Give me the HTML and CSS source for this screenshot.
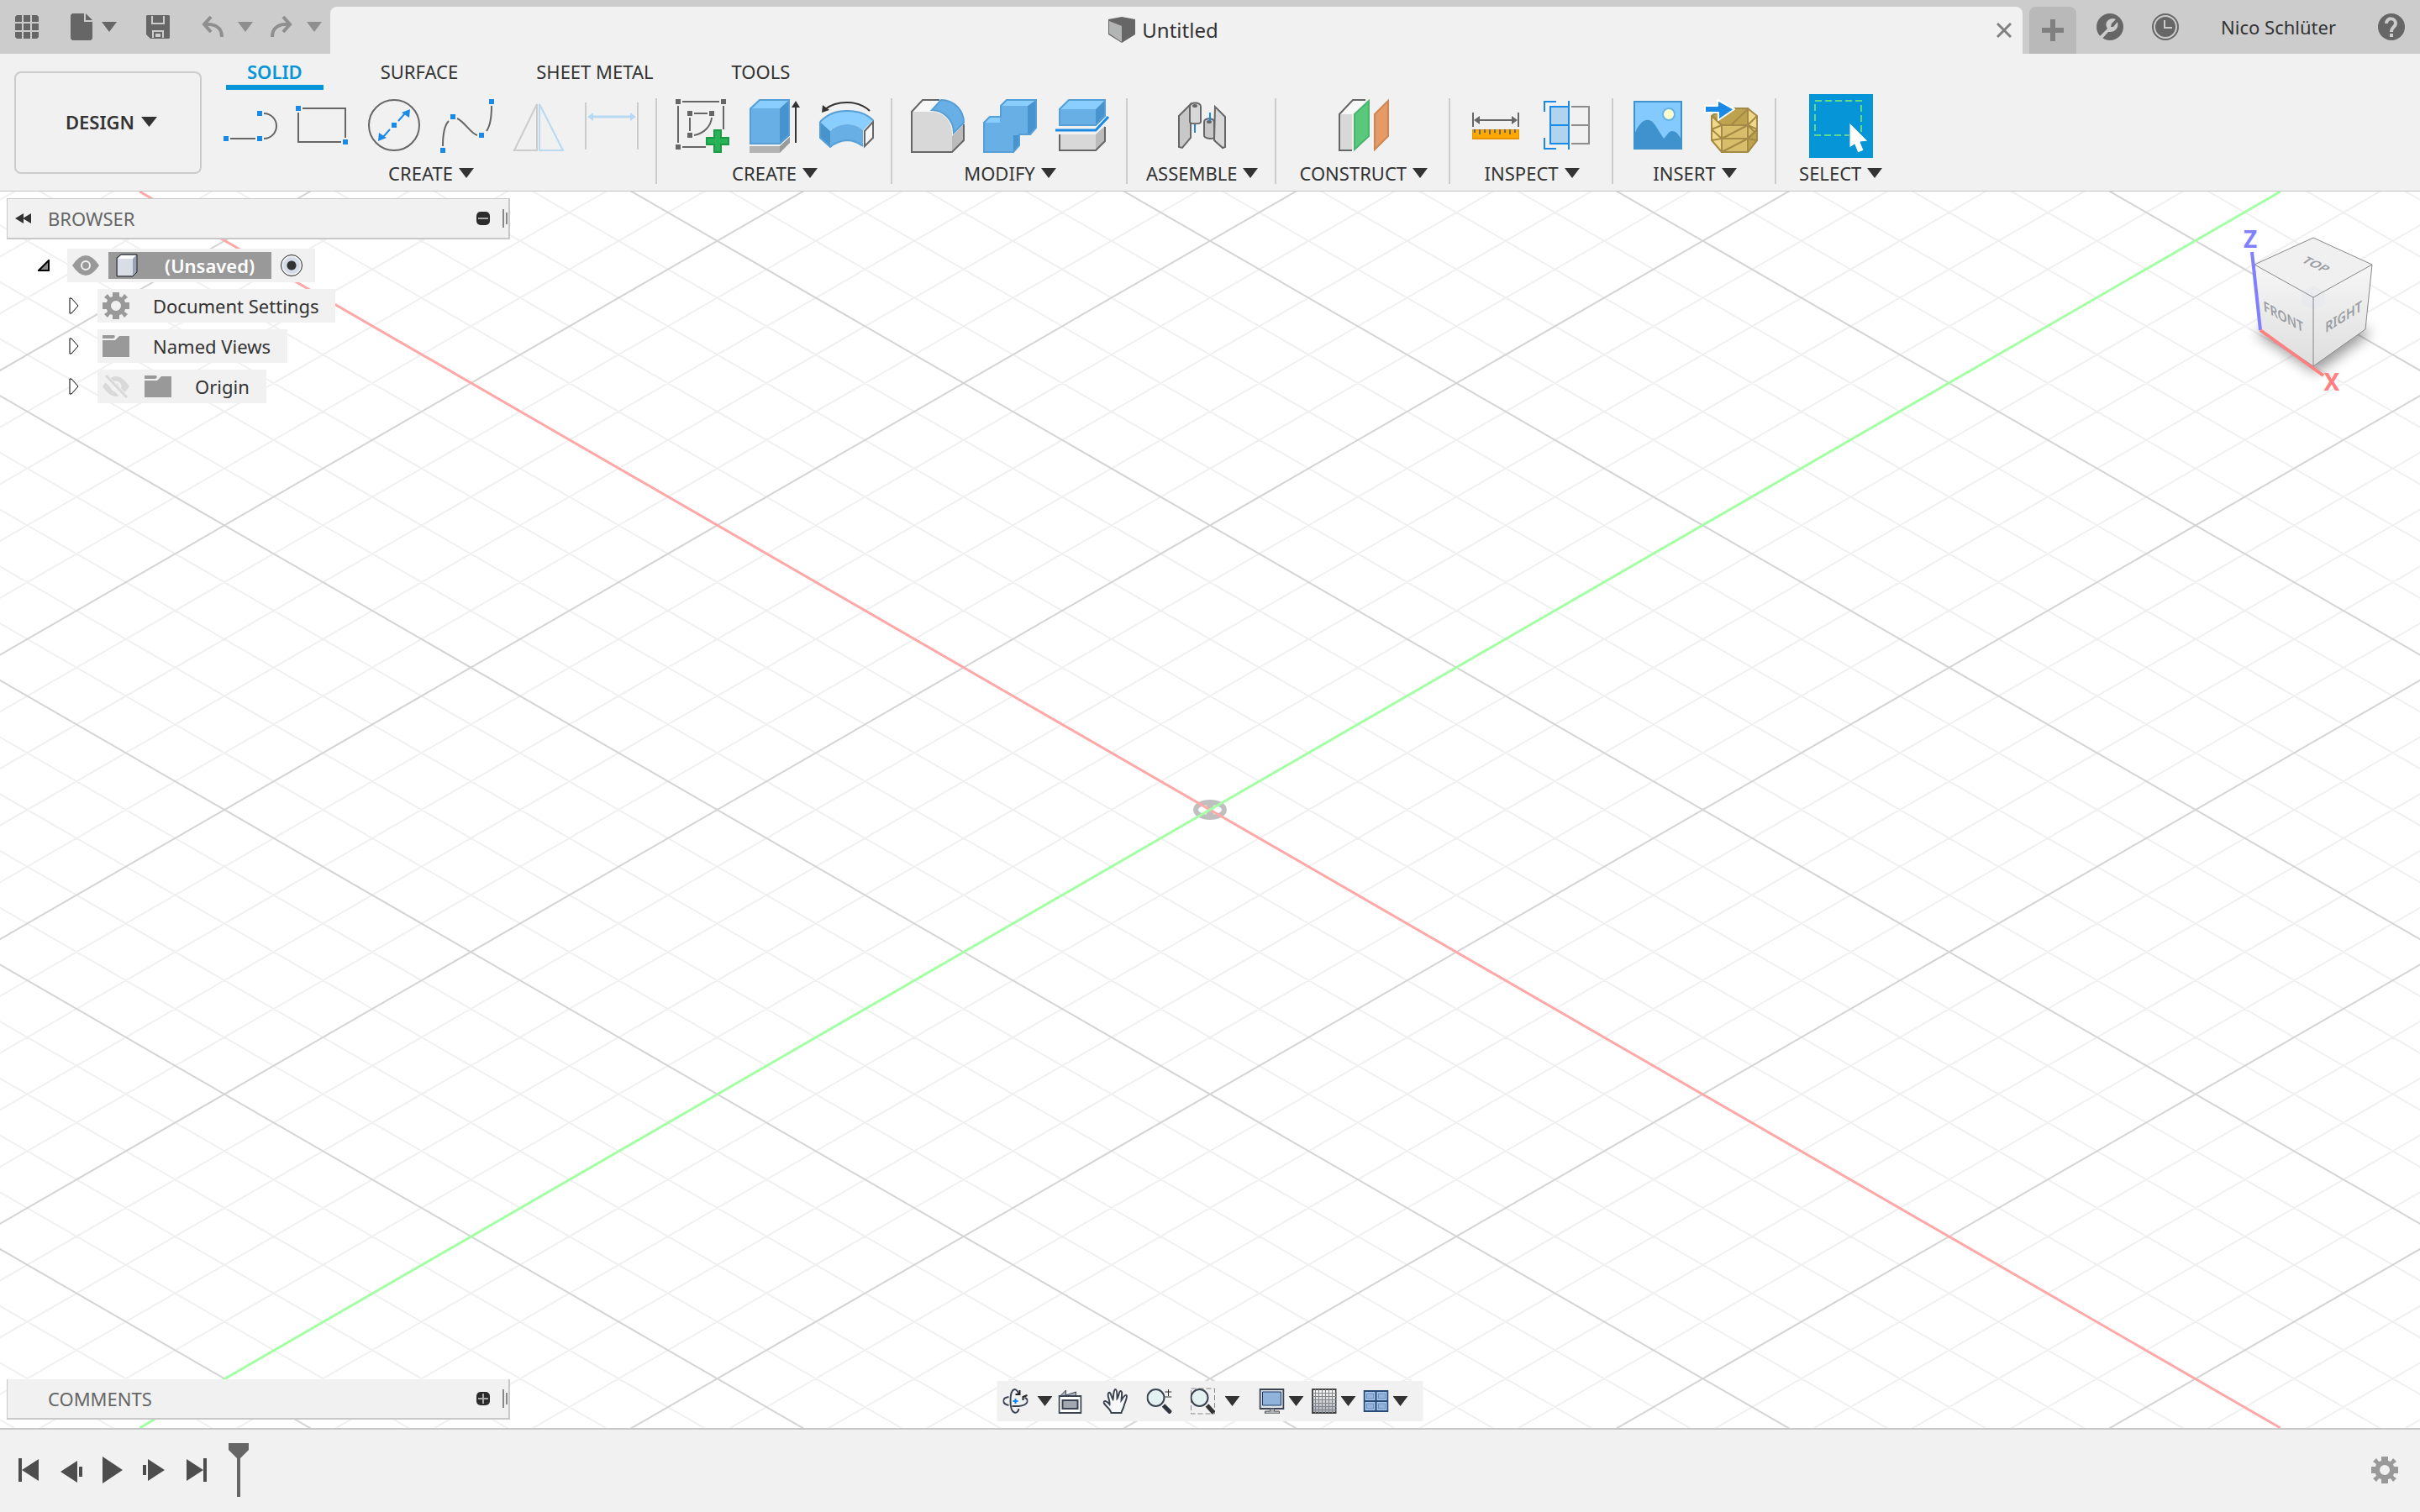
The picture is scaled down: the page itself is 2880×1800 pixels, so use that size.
FILE: index.html
```html
<!DOCTYPE html>
<html lang="en">
<head>
<meta charset="utf-8">
<title>Untitled</title>
<link rel="stylesheet" href="styles.css">
</head>
<body>
<header class="topbar">
  <div class="quick">
    <button class="icon-btn space-l" aria-label="Data panel"><svg width="28" height="28" fill="#666"><path d="M2 0H8V8H0V2ZM10 0H18V8H10ZM20 0H26L28 2V8H20ZM0 10H8V18H0ZM10 10H18V18H10ZM20 10H28V18H20ZM0 20H8V28H2L0 26ZM10 20H18V28H10ZM20 20H28V26L26 28H20Z"/></svg></button>
    <button class="icon-btn file space-m" aria-label="File"><svg width="26" height="32" fill="#666"><path d="M2 0H16V10H26V30L24 32H2L0 30V2ZM18 0L26 8H18Z"/></svg><svg width="18" height="12" fill="#666"><path d="M0 0H18L9 12Z"/></svg></button>
    <button class="icon-btn space-l" aria-label="Save"><svg width="28" height="28" fill="#666"><path fill-rule="evenodd" d="M1 0H27L28 1V27L27 28H5L0 23V1ZM6 1V11H22V1H20V9H8V1ZM7 27H9V20H19V27H21V18H7ZM11 26H17V22H11Z"/></svg></button>
    <button class="icon-btn history space-s" aria-label="Undo"><svg width="26" height="26" fill="none" stroke="#8f8f8f" stroke-width="4"><path d="M11 1L3 10L11 19M3 10C15 9 24 13 24 25"/></svg><svg width="18" height="12" fill="#8f8f8f"><path d="M0 0H18L9 12Z"/></svg></button>
    <button class="icon-btn history" aria-label="Redo"><svg width="26" height="26" fill="none" stroke="#8f8f8f" stroke-width="4"><path d="M15 1L23 10L15 19M23 10C11 9 2 13 2 25"/></svg><svg width="18" height="12" fill="#8f8f8f"><path d="M0 0H18L9 12Z"/></svg></button>
  </div>
  <div class="doc-tab">
    <div class="doc-title"><svg width="32" height="32"><path d="M0 3L16 0L32 3V21L16 31L0 21Z" fill="#666"/><path d="M1 5L16 11V30L1 20Z" fill="#b2b5b4"/></svg><span>Untitled</span></div>
    <button class="icon-btn" aria-label="Close"><svg width="18" height="18" stroke="#808080" stroke-width="3"><path d="M1 1L17 17M17 1L1 17"/></svg></button>
  </div>
  <button class="new-tab" aria-label="New design"><svg width="26" height="26" fill="#808080"><path d="M10 0H16V10H26V16H16V26H10V16H0V10H10Z"/></svg></button>
  <div class="account">
    <button class="icon-btn" aria-label="Extensions"><svg width="32" height="32"><circle cx="16" cy="16" r="16" fill="#666"/><path d="M2 29L13 18C9 12 13 6 20 6L23 7L18 12L17 16L20 16L25 10C27 17 22 23 14 22L5 32Z" fill="#ccc"/></svg></button>
    <button class="icon-btn" aria-label="Job status"><svg width="32" height="32"><circle cx="16" cy="16" r="15" fill="none" stroke="#666" stroke-width="2"/><circle cx="16" cy="16" r="12" fill="#666"/><path d="M15 8V17H24" fill="none" stroke="#ccc" stroke-width="2"/></svg></button>
    <button class="user">Nico Schlüter</button>
    <button class="icon-btn" aria-label="Help"><svg width="32" height="32"><circle cx="16" cy="16" r="16" fill="#666"/><path d="M10 12C10 4 21 5 21 12C21 16 16 16 16 22" fill="none" stroke="#ccc" stroke-width="4"/><path d="M14 24H18V28H14Z" fill="#ccc"/></svg></button>
  </div>
</header>

<section class="toolbar">
  <button class="workspace">DESIGN <svg width="19" height="12"><path d="M0 0H19L9.500 12Z"/></svg></button>
  <div class="ribbon">
    <nav class="tabs">
      <a class="tab active" href="#solid">SOLID</a>
      <a class="tab" href="#surface">SURFACE</a>
      <a class="tab" href="#sheet">SHEET METAL</a>
      <a class="tab" href="#tools">TOOLS</a>
    </nav>
    <div class="groups">
      <div class="group first">
        <div class="tools">
          <button class="tool" aria-label="Line"><svg viewBox="0 0 64 64" class="line"><path d="M8 47H38M48 17A15 15 0 0 1 48 47"/><path class="node" d="M0 44h6v6h-6ZM40 44h6v6h-6ZM40 14h6v6h-6Z"/></svg></button>
          <button class="tool" aria-label="Rectangle"><svg viewBox="0 0 64 64" class="line"><path d="M8 11H59V46M54 51H3V16"/><path class="node" d="M0 8h6v6h-6ZM56 48h6v6h-6Z"/></svg></button>
          <button class="tool" aria-label="Circle"><svg viewBox="0 0 64 64" class="line"><circle cx="31" cy="31" r="30"/><path d="M36 26L44 17M26 36L18 45" stroke="#1b8ae6"/><path class="node" d="M28 28h6v6h-6ZM50 12L49 22L40 16ZM12 50L13 40L22 46Z"/></svg></button>
          <button class="tool" aria-label="Spline"><svg viewBox="0 0 64 64" class="line"><path d="M3 56C3 40 6 30 10 26M20 23C29 27 37 42 44 43M55 38C60 31 61 20 61 8"/><path class="node" d="M0 58h6v6h-6ZM12 18h6v6h-6ZM46 40h6v6h-6ZM58 0h6v6h-6Z"/></svg></button>
          <button class="tool" aria-label="Mirror" disabled><svg viewBox="0 0 64 64" class="line"><path d="M2 61H29V6Z" stroke="#ccc"/><path d="M32 6V61H60Z" stroke="#b8d9f3"/></svg></button>
          <button class="tool" aria-label="Dimension" disabled><svg viewBox="0 0 64 64" class="line"><path d="M1 4V60M63 4V60" stroke="#ccc"/><path d="M8 21H56" stroke="#b8d9f3" stroke-width="3"/><path d="M3 21L10 16V26ZM61 21L54 16V26Z" fill="#b8d9f3" stroke="none"/></svg></button>
        </div>
        <button class="label">CREATE<svg width="18" height="12"><path d="M0 0H18L9 12Z"/></svg></button>
      </div>
      <span class="sep"></span>
      <div class="group">
        <div class="tools">
          <button class="tool" aria-label="Create sketch"><svg viewBox="0 0 64 64" class="line"><path d="M8 3H52M3 8V52M57 8V36M8 57H36M22 17H38M17 22V38M22 43C34 41 42 32 43 22"/><path fill="#666" stroke="none" d="M0 0h6v6h-6ZM54 0h6v6h-6ZM0 54h6v6h-6ZM14 14h6v6h-6ZM40 14h6v6h-6ZM14 40h6v6h-6Z"/><path d="M46 37H54V46H63V54H54V63H46V54H37V46H46Z" fill="#27b355" stroke="#1b9a45"/></svg></button>
          <button class="tool" aria-label="Extrude"><svg viewBox="0 0 64 64"><path d="M2 11L14 0H50L38 11Z" fill="#8aceff"/><path d="M2 11H38V54H2Z" fill="#68afe5"/><path d="M38 11L50 0V43L38 54Z" fill="#4693cd"/><path d="M3 54V11.500L14 1H49V43L38 53H3" fill="none" stroke="#559fd6" stroke-width="2"/><path d="M2 56H38V64H2Z" fill="#b3b3b3"/><path d="M38 56L50 45V52L38 64Z" fill="#999"/><path d="M57 52V8" stroke="#333" stroke-width="2"/><path d="M57 2L62 10H52Z" fill="#333"/></svg></button>
          <button class="tool" aria-label="Revolve"><svg viewBox="0 0 64 64"><path d="M0 27Q12 14 32 14Q52 14 63 25L51 37Q44 30 32 30Q20 30 12 38Z" fill="#8aceff"/><path d="M12 38Q20 30 32 30Q44 30 51 37V56Q42 49 32 49Q20 50 12 57Z" fill="#68afe5"/><path d="M0 27L12 38V57L0 46Z" fill="#4693cd"/><path d="M0 27Q12 14 32 14Q52 14 63 25M51 56Q42 49 32 49Q20 50 12 57L0 46V27" fill="none" stroke="#559fd6" stroke-width="2"/><path d="M53 38L63 27V46L53 56Z" fill="#f8f8f8" stroke="#666" stroke-width="2"/><path d="M59 14C46 1 20 1 6 12" fill="none" stroke="#333" stroke-width="2"/><path d="M2 16L3 7L11 13Z" fill="#333"/></svg></button>
        </div>
        <button class="label">CREATE<svg width="18" height="12"><path d="M0 0H18L9 12Z"/></svg></button>
      </div>
      <span class="sep"></span>
      <div class="group">
        <div class="tools">
          <button class="tool" aria-label="Fillet"><svg viewBox="0 0 64 64"><path d="M1 15L14 1H36L24 15Z" fill="#f8f8f8"/><path d="M1 15H24C38 15 49 26 49 42V63H1Z" fill="#d8d8d8"/><path d="M49 44L63 30V49L49 63Z" fill="#bbb"/><path d="M34 1H14L1 15V63H49L63 49V30" fill="none" stroke="#666" stroke-width="2"/><path d="M36 1C52 1 63 14 63 28L51 40C51 24 38 13 25 13Z" fill="#68afe5" stroke="#559fd6" stroke-width="2"/></svg></button>
          <button class="tool" aria-label="Combine"><svg viewBox="0 0 64 64"><path d="M0 28L8 20H20V28ZM20 8L28 0H64L53 8Z" fill="#8aceff"/><path d="M0 28H20V8H53V43H36V64H0Z" fill="#68afe5"/><path d="M53 8L64 0V34L56 43H53ZM36 43H43V55L36 64Z" fill="#4693cd"/><path d="M1 28L8 21H21V8L28 1H63V34L56 42H43V55L36 63H1Z" fill="none" stroke="#559fd6" stroke-width="2"/></svg></button>
          <button class="tool" aria-label="Split body"><svg viewBox="0 0 64 64"><path d="M4 12L16 0H60L48 12Z" fill="#8aceff"/><path d="M4 12H48V32H4Z" fill="#68afe5"/><path d="M48 12L60 0V20L48 32Z" fill="#4693cd"/><path d="M5 31V12L16 1H59V20L48 31Z" fill="none" stroke="#559fd6" stroke-width="2"/><path d="M0 37H48L63 21" fill="none" stroke="#1b8ae6" stroke-width="3"/><path d="M5 42H48V61H5Z" fill="#d8d8d8"/><path d="M48 42L59 32V50L48 61Z" fill="#bbb"/><path d="M5 42V61H48L59 50V33" fill="none" stroke="#666" stroke-width="2"/></svg></button>
        </div>
        <button class="label">MODIFY<svg width="18" height="12"><path d="M0 0H18L9 12Z"/></svg></button>
      </div>
      <span class="sep"></span>
      <div class="group">
        <div class="tools">
          <button class="tool" aria-label="Joint"><svg viewBox="0 0 64 64" stroke="#666" stroke-width="2"><path d="M4 20L18 6V46L8 58L4 57Z" fill="#c8c8c8"/><path d="M17 9C17 3 30 3 30 9V27C30 30 17 30 17 27Z" fill="#d8d8d8"/><ellipse cx="23" cy="8" rx="2" ry="1"/><path d="M59 21L47 9L46 49L56 58L59 57Z" fill="#d8d8d8"/><path d="M34 27C34 22 46 22 46 27V46C43 48 34 47 34 43Z" fill="#c8c8c8"/><ellipse cx="40" cy="27" rx="2" ry="1"/><path d="M23 30V40M41 16V26" stroke="#1b8ae6"/></svg></button>
        </div>
        <button class="label">ASSEMBLE<svg width="18" height="12"><path d="M0 0H18L9 12Z"/></svg></button>
      </div>
      <span class="sep"></span>
      <div class="group roomy">
        <div class="tools">
          <button class="tool" aria-label="Offset plane"><svg viewBox="0 0 64 64"><path d="M3 18L19 1H35L19 18Z" fill="#f8f8f8"/><path d="M3 18H18V61H3Z" fill="#d8d8d8"/><path d="M34 1H19L3 18V61H18" fill="none" stroke="#666" stroke-width="2"/><path d="M21 18L38 2V44L21 60Z" fill="#5ac87c" stroke="#48b56c" stroke-width="2"/><path d="M45 18L61 2V44L45 60Z" fill="#e69a66" stroke="#d08653" stroke-width="2"/></svg></button>
        </div>
        <button class="label">CONSTRUCT<svg width="18" height="12"><path d="M0 0H18L9 12Z"/></svg></button>
      </div>
      <span class="sep"></span>
      <div class="group">
        <div class="tools">
          <button class="tool" aria-label="Measure"><svg viewBox="0 0 64 64"><path d="M5 16V33M59 16V33M10 25H54" stroke="#666" stroke-width="2"/><path d="M6 25L13 20V30ZM58 25L51 20V30Z" fill="#666"/><path d="M4 36H60V48H4Z" fill="#e69500"/><path d="M5 37H59V46H5Z" fill="#ffa800"/><path d="M7 36V40M13 36V42M19 36V40M25 36V42M31 36V40M37 36V42M43 36V40M49 36V42M55 36V40" stroke="#666" stroke-width="2"/></svg></button>
          <button class="tool" aria-label="Section"><svg viewBox="0 0 64 64" class="line"><path d="M11 9H33V53H11Z" fill="#b0d3ee" stroke="#1b8ae6"/><path d="M11 31H33M33 2V60M18 3H4V15M18 59H4V46" stroke="#1b8ae6"/><path d="M36 9H57V53H36M36 31H57" stroke="#8c8c8c"/></svg></button>
        </div>
        <button class="label">INSPECT<svg width="18" height="12"><path d="M0 0H18L9 12Z"/></svg></button>
      </div>
      <span class="sep"></span>
      <div class="group">
        <div class="tools">
          <button class="tool" aria-label="Canvas"><svg viewBox="0 0 64 64"><path d="M3 3H59V59H3Z" fill="#84caff"/><circle cx="44" cy="18" r="7" fill="#ffc" stroke="#66b2ea" stroke-width="2"/><path d="M3 42C11 22 22 20 29 33L38 47C42 43 44 38 48 38C54 38 57 45 59 48V59H3Z" fill="#3f92cd"/><path d="M3 3H59V59H3Z" fill="none" stroke="#3f92cd" stroke-width="2"/></svg></button>
          <button class="tool" aria-label="Insert mesh"><svg viewBox="0 0 64 64" stroke="#a38a45" stroke-width="2" stroke-linejoin="round"><path d="M9 20L21 11H52L63 20V49L52 63H21L9 49Z" fill="#f0d78a"/><path d="M21 31H52L63 42V49L52 63H21Z" fill="#d8bd6b"/><path d="M10 20L21 11H52V31H21ZM52 47L63 37V49L52 63Z" fill="#bfa24e"/><path d="M21 31H52L63 20M21 31V63M52 31V63M9 20L21 31L9 36L21 47H52L63 36L52 31M21 47L52 31M21 47L9 49M21 63L52 47L63 49M32 31L52 12" fill="none"/><path d="M1 8H16V1L36 12L17 25V16H1Z" fill="#1b8ae6" stroke="#fff" stroke-width="2"/></svg></button>
        </div>
        <button class="label">INSERT<svg width="18" height="12"><path d="M0 0H18L9 12Z"/></svg></button>
      </div>
      <span class="sep"></span>
      <div class="group roomy">
        <div class="tools">
          <button class="tool selected" aria-label="Select"><svg viewBox="0 0 76 76"><path d="M7 8H62V49H7Z" fill="none" stroke="#62d98a" stroke-width="2" stroke-dasharray="8 4"/><path d="M48 34L70 56L61 57L65 67L58 70L54 60L48 64Z" fill="#fff" stroke="#0696d7"/></svg></button>
        </div>
        <button class="label">SELECT<svg width="18" height="12"><path d="M0 0H18L9 12Z"/></svg></button>
      </div>
    </div>
  </div>
</section>

<main class="viewport">
  <svg class="grid" width="100%" height="100%" aria-hidden="true">
    <svg x="50%" y="50%" overflow="visible" fill="none" stroke-width="2">
      <path id="minor" stroke="#f0f0f0"/>
      <path id="major" stroke="#d4d4d4"/>
      <ellipse rx="17" ry="9" stroke="#bfbfbf" stroke-width="6"/>
      <path d="M-8 -9H8L0 0L8 9H-8L0 0Z" fill="#bfbfbf"/>
      <path d="M-1274 -736L1274 736" stroke="#ffa8a8" stroke-width="3"/>
      <path d="M-1274 736L1274 -736" stroke="#a4ffa4" stroke-width="3"/>
    </svg>
  </svg>

  <aside class="browser">
    <div class="panel">
      <button class="icon-btn collapse" aria-label="Collapse"><svg width="19" height="12"><path d="M10 0V12L0 6ZM19 0V12L9 6Z" fill="#333"/></svg></button>
      <h2>BROWSER</h2>
      <button class="icon-btn" aria-label="Minimise"><svg width="16" height="16"><rect width="16" height="16" rx="5" fill="#2b2b2b"/><path d="M2 8H14" stroke="#aaa" stroke-width="2"/></svg></button>
      <svg width="7" height="22" stroke="#888" stroke-width="2"><path d="M1 0V22M5 4V18"/></svg>
    </div>
    <ul class="tree">
      <li class="root">
        <button class="icon-btn twist" aria-label="Collapse node"><svg width="14" height="14"><path d="M13 1V13H1Z" fill="#888" stroke="#000" stroke-width="2"/></svg></button>
        <div class="item">
          <svg width="32" height="24"><path d="M0 12Q16 -12 32 12Q16 36 0 12Z" fill="#999"/><circle cx="16" cy="12" r="5" fill="none" stroke="#f1f1f1" stroke-width="2"/></svg>
          <div class="picked"><svg width="26" height="28"><path d="M1 5L6 1H25V22L20 27H1Z" fill="#9aa3b3" stroke="#222"/><path d="M2 6L6 2H24L20 6Z" fill="#fff"/><path d="M2 6H20V26H2Z" fill="#d9dde6"/></svg><span>(Unsaved)</span></div>
          <input type="radio" name="active" checked aria-label="Activate component">
        </div>
      </li>
      <li>
        <button class="icon-btn twist" aria-label="Expand"><svg width="12" height="20"><path d="M1 1L3 1L11 10L3 19H1Z" fill="#fff" stroke="#000" stroke-width="1"/></svg></button>
        <div class="item"><svg width="32" height="32" viewBox="0 0 32 32" class="gear"><path d="M12 0H20V5L23 6L26 2L30 6L26 9L27 12H32V20H27L26 23L30 26L26 30L23 26L20 27V32H12V27L9 26L6 30L2 26L6 23L5 20H0V12H5L6 9L2 6L6 2L9 6L12 5ZM16 10A6 6 0 0 0 16 22A6 6 0 0 0 16 10Z"/></svg><span>Document Settings</span></div>
      </li>
      <li>
        <button class="icon-btn twist" aria-label="Expand"><svg width="12" height="20"><path d="M1 1L3 1L11 10L3 19H1Z" fill="#fff" stroke="#000" stroke-width="1"/></svg></button>
        <div class="item"><svg width="32" height="26" fill="#999"><path d="M0 0H14L15 2L13 4H0ZM0 6H15L20 1H32V26H0Z"/></svg><span>Named Views</span></div>
      </li>
      <li class="hidden-node">
        <button class="icon-btn twist" aria-label="Expand"><svg width="12" height="20"><path d="M1 1L3 1L11 10L3 19H1Z" fill="#fff" stroke="#000" stroke-width="1"/></svg></button>
        <div class="item"><svg width="32" height="28"><path d="M0 14Q16 -10 32 14Q16 38 0 14Z" fill="#d9d9d9"/><circle cx="16" cy="14" r="5" fill="none" stroke="#f1f1f1" stroke-width="3"/><path d="M2 2L27 27" stroke="#f1f1f1" stroke-width="8"/><path d="M4 1L29 27" stroke="#d9d9d9" stroke-width="3"/></svg><svg width="32" height="26" fill="#999"><path d="M0 0H14L15 2L13 4H0ZM0 6H15L20 1H32V26H0Z"/></svg><span>Origin</span></div>
      </li>
    </ul>
  </aside>

  <svg class="viewcube" width="180" height="230" viewBox="2660 250 180 230" role="img" aria-label="View cube">
    <defs>
      <filter id="soft" x="-50%" y="-50%" width="200%" height="200%"><feGaussianBlur stdDeviation="8"/></filter>
      <linearGradient id="face" x1="0" y1="0" x2="0" y2="1"><stop offset="0" stop-color="#f6f6f6"/><stop offset="1" stop-color="#dedede"/></linearGradient>
    </defs>
    <path d="M2684 396L2753 362L2822 396L2756 444Z" fill="#000" opacity=".4" filter="url(#soft)"/>
    <path d="M2683 315L2753 354V436L2690 393Z" fill="url(#face)"/>
    <path d="M2823 315L2753 354V436L2815 392Z" fill="url(#face)"/>
    <path d="M2753 283L2823 315L2753 354L2683 315Z" fill="#f0f0f0"/>
    <path d="M2753 340L2767 347V362L2753 369L2739 362V347Z" fill="#e6e8ec" opacity=".6"/>
    <path d="M2753 283L2823 315L2753 354L2683 315ZM2753 354V436L2690 393L2683 315M2753 436L2815 392L2823 315" fill="none" stroke="#888"/>
    <path d="M2680 300L2690 393" stroke="#8080ff" stroke-width="4"/>
    <path d="M2690 393L2765 447" stroke="#ff8080" stroke-width="4"/>
    <g class="cube-text">
      <text transform="matrix(.84 .46 .1 1 2718 383)">FRONT</text>
      <text transform="matrix(.84 -.52 0 1 2789 383)">RIGHT</text>
      <text transform="matrix(.84 .4 -.7 .5 2752 318)">TOP</text>
    </g>
    <text class="axis" x="2678" y="295" fill="#8080ff">Z</text>
    <text class="axis" x="2775" y="465" fill="#ff8080">X</text>
  </svg>

  <div class="panel comments">
    <h2>COMMENTS</h2>
    <button class="icon-btn" aria-label="Expand comments"><svg width="16" height="16"><rect width="16" height="16" rx="5" fill="#2b2b2b"/><path d="M2 8H14M8 2V14" stroke="#aaa" stroke-width="2"/></svg></button>
    <svg width="7" height="22" stroke="#888" stroke-width="2"><path d="M1 0V22M5 4V18"/></svg>
  </div>

  <div class="navbar">
    <button class="icon-btn nav-drop" aria-label="Orbit"><svg width="30" height="30" fill="none" stroke="#3b4351" stroke-width="2"><path d="M7 20C-2 18 -1 11 7 10M11 21H19C30 20 32 13 26 11M19 7C17 -1 9 -3 9 15C9 32 18 31 19 24"/><path d="M20 2V7H15M29 8L24 10V14" stroke="#222"/><path d="M15 12V18M12 15H18" stroke="#0a84ff"/></svg><svg width="18" height="12"><path d="M0 0H18L9 12Z"/></svg></button>
    <button class="icon-btn nav-look" aria-label="Look at"><svg width="28" height="30"><path d="M2 9L9 2V8L21 4V9" fill="#aab0ba" stroke="#3b4351"/><path d="M1 9H27V29H1Z" fill="#fff" stroke="#3b4351" stroke-width="2"/><path d="M5 14H23V24H5Z" fill="#a2a8b2" stroke="#3b4351" stroke-width="2"/></svg></button>
    <button class="icon-btn nav-plain" aria-label="Pan"><svg width="30" height="30"><path d="M10 29C9 24 3 21 1 17C1 14 4 14 8 19C9 15 4 7 7 5C9 3 10 10 12 13C13 10 12 2 15 1C17 1 17 10 17 12C19 10 19 3 21 3C24 3 22 11 22 14C24 11 26 7 28 8C30 10 26 16 25 21C24 25 22 27 22 29Z" fill="#f8f9fb" stroke="#3b4351" stroke-width="2"/></svg></button>
    <button class="icon-btn nav-plain" aria-label="Zoom"><svg width="30" height="30"><path d="M20 20L29 29" stroke="#2f3540" stroke-width="5"/><circle cx="11" cy="11" r="10" fill="#e4f1f1" stroke="#3b4351" stroke-width="2"/><path d="M26 1V9M22 4H30M22 10H30" stroke="#333" stroke-width="1"/></svg></button>
    <button class="icon-btn nav-fit" aria-label="Fit"><svg width="30" height="32"><path d="M1 1H29V31H1Z" fill="none" stroke="#888" stroke-dasharray="6 3"/><path d="M20 21L28 30" stroke="#333" stroke-width="5"/><circle cx="11" cy="12" r="10" fill="#e4f1f1" stroke="#3b4351" stroke-width="2"/></svg><svg width="18" height="12"><path d="M0 0H18L9 12Z"/></svg></button>
    <button class="icon-btn nav-view" aria-label="Display settings"><svg width="30" height="30"><path d="M1 1H29V24H1Z" fill="#dfe3ea" stroke="#3b4351" stroke-width="2"/><path d="M4 4H26V20H4Z" fill="#90b3dc" stroke="#1f3a68"/><path d="M13 24H18V27H24V30H7V27H13Z" fill="#aab0ba" stroke="#555"/></svg><svg width="18" height="12"><path d="M0 0H18L9 12Z"/></svg></button>
    <button class="icon-btn nav-view" aria-label="Grid and snaps"><svg width="30" height="30" shape-rendering="crispEdges"><defs><linearGradient id="gg" x1="0" y1="0" x2="0" y2="1"><stop offset="0" stop-color="#fff"/><stop offset="1" stop-color="#a4adba"/></linearGradient></defs><path d="M1 1H29V29H1Z" fill="url(#gg)" stroke="#444" stroke-width="2"/><path d="M5 1V29M9 1V29M13 1V29M17 1V29M21 1V29M25 1V29M1 5H29M1 9H29M1 13H29M1 17H29M1 21H29M1 25H29" stroke="#858585"/></svg><svg width="18" height="12"><path d="M0 0H18L9 12Z"/></svg></button>
    <button class="icon-btn nav-view" aria-label="Viewports"><svg width="30" height="26"><path d="M1 1H29V25H1Z" fill="#a9c5e8" stroke="#2a4a7a" stroke-width="2"/><path d="M15 1V25M1 13H29" stroke="#2a4a7a" stroke-width="2"/><path d="M4 4H12V10H4ZM18 4H26V10H18ZM4 16H12V22H4ZM18 16H26V22H18Z" fill="#93b4de" stroke="#6b8fbf"/></svg><svg width="18" height="12"><path d="M0 0H18L9 12Z"/></svg></button>
  </div>
</main>

<footer class="timeline">
  <button class="icon-btn" aria-label="Go to start"><svg width="24" height="32" fill="#4d4d4d"><path d="M0 2H4V30H0ZM24 3V29L4 16Z"/></svg></button>
  <button class="icon-btn" aria-label="Step back"><svg width="24" height="32" fill="#4d4d4d"><path d="M20 5V31L0 18ZM22 12H26V24H22Z"/></svg></button>
  <button class="icon-btn" aria-label="Play"><svg width="24" height="32" fill="#4d4d4d"><path d="M0 0L24 16L0 32Z"/></svg></button>
  <button class="icon-btn" aria-label="Step forward"><svg width="24" height="32" fill="#4d4d4d"><path d="M-2 10H2V22H-2ZM4 3L24 16L4 29Z"/></svg></button>
  <button class="icon-btn" aria-label="Go to end"><svg width="24" height="32" fill="#4d4d4d"><path d="M0 3L20 16L0 29ZM20 2H24V30H20Z"/></svg></button>
  <button class="icon-btn" aria-label="Timeline marker"><svg width="24" height="64" fill="#666"><path d="M0 0H24V8L14 18V64H10V18L0 8Z"/></svg></button>
  <button class="icon-btn settings" aria-label="Timeline settings"><svg width="32" height="32" viewBox="0 0 32 32" class="gear"><path d="M12 0H20V5L23 6L26 2L30 6L26 9L27 12H32V20H27L26 23L30 26L26 30L23 26L20 27V32H12V27L9 26L6 30L2 26L6 23L5 20H0V12H5L6 9L2 6L6 2L9 6L12 5ZM16 10A6 6 0 0 0 16 22A6 6 0 0 0 16 10Z"/></svg></button>
</footer>
<script src="grid.js"></script>
</body>
</html>
```
FILE: grid.js
```js
// Isometric ground grid: two families of 30 degree lines, every fifth one heavy.
const STEP = 67.72;
const REACH = 3000;
const RISE = REACH * Math.tan(Math.PI / 6);
let minor = "";
let major = "";
for (let k = -60; k <= 60; k++) {
  if (k === 0) continue;
  const y = k * STEP;
  const lines =
    `M${-REACH} ${y - RISE}L${REACH} ${y + RISE}` +
    `M${-REACH} ${y + RISE}L${REACH} ${y - RISE}`;
  if (k % 5 === 0) major += lines;
  else minor += lines;
}
document.getElementById("minor").setAttribute("d", minor);
document.getElementById("major").setAttribute("d", major);
```
FILE: styles.css
```css
* { box-sizing: border-box; }

body {
  margin: 0;
  min-height: 100vh;
  display: flex;
  flex-direction: column;
  background: #f1f1f1;
  color: #333;
  font: 22px/28px "Noto Sans", sans-serif;
}

svg { display: block; flex: none; }

button {
  margin: 0;
  padding: 0;
  border: 0;
  background: none;
  color: inherit;
  font: inherit;
  cursor: pointer;
}

button:disabled { cursor: default; }

.icon-btn { display: flex; align-items: center; }

/* Top bar */
.topbar { display: flex; height: 64px; padding-top: 8px; background: #ccc; }
.quick { display: flex; align-items: center; padding: 0 10px 8px 18px; }
.space-l { margin-right: 38px; }
.space-m { margin-right: 35px; }
.space-s { margin-right: 21px; }
.file { gap: 11px; }
.history { gap: 17px; }
.doc-tab {
  flex: 1;
  display: flex;
  align-items: center;
  padding-right: 13px;
  background: #f1f1f1;
  border-radius: 8px 8px 0 0;
}
.doc-title {
  flex: 1;
  display: flex;
  justify-content: center;
  align-items: center;
  gap: 8px;
  font-size: 24px;
}
.new-tab {
  display: flex;
  align-items: center;
  justify-content: center;
  width: 56px;
  margin-left: 8px;
  background: #b9b9b9;
  border-radius: 8px 8px 0 0;
}
.account { display: flex; align-items: center; gap: 34px; padding: 0 18px 8px 24px; }
.user { margin: 0 16px; }

/* Toolbar */
.toolbar { display: flex; height: 164px; border-bottom: 1px solid #c4c4c4; }
.workspace {
  display: flex;
  align-items: center;
  justify-content: center;
  gap: 8px;
  width: 223px;
  height: 122px;
  margin: 21px 6px 0 17px;
  padding: 0 0 2px 8px;
  border: 2px solid #ccc;
  border-radius: 8px;
  font-weight: 600;
}
.workspace svg, .label svg, .navbar svg:last-child:not(:first-child) { fill: #333; }
.tabs { display: flex; gap: 43px; padding-left: 23px; }
.tab {
  padding: 6px 25px 1px;
  border-bottom: 6px solid transparent;
  line-height: 30px;
  color: inherit;
  text-decoration: none;
}
.tab.active { color: #0696d7; border-color: #0696d7; font-weight: 600; }
.groups { display: flex; padding-top: 5px; }
.group { padding: 0 20px 0 22px; }
.group.first { padding-left: 20px; }
.tools { display: flex; justify-content: center; align-items: center; gap: 22px; height: 76px; }
.tool { width: 64px; height: 64px; }
.tool svg { width: 100%; height: 100%; overflow: visible; }
.tool.selected { width: 76px; height: 76px; background: #0696d7; }
.line { fill: none; stroke: #666; stroke-width: 2; }
.node { fill: #1b8ae6; stroke: none; }
.label {
  display: flex;
  align-items: center;
  justify-content: center;
  gap: 7px;
  width: 100%;
  margin-top: 4px;
}
.roomy .label { padding: 0 5px; }
.sep { width: 2px; height: 102px; margin-top: 5px; background: #ccc; }

/* Viewport */
.viewport { position: relative; flex: 1; overflow: hidden; background: #fff; }
.grid { position: absolute; inset: 0; }
.browser { position: absolute; top: 8px; left: 8px; }
.panel {
  display: flex;
  align-items: center;
  width: 599px;
  height: 49px;
  background: #f1f1f1;
  border: 1px solid #c8c8c8;
  border-width: 1px 2px 2px 1px;
}
.panel h2 { flex: 1; margin: 0; font: inherit; color: #666; }
.panel > svg { margin-left: 15px; }
.collapse { width: 48px; padding-left: 9px; }
.comments { position: absolute; left: 8px; bottom: 10px; height: 48px; border-top: 0; }
.comments h2 { padding-left: 48px; }

.tree {
  display: flex;
  flex-direction: column;
  align-items: flex-start;
  gap: 8px;
  margin: 11px 0 0;
  padding: 0;
  list-style: none;
}
.tree li { display: flex; padding-left: 74px; }
.tree .root { padding-left: 37px; }
.twist { width: 34px; }
.root .twist { width: 35px; }
.item {
  display: flex;
  align-items: center;
  gap: 28px;
  height: 40px;
  padding: 0 20px 0 6px;
  background: #f1f1f1;
}
.root .item { gap: 11px; padding-right: 15px; }
.hidden-node .item > svg:first-child { margin-right: -10px; }
.picked {
  display: flex;
  align-items: center;
  gap: 32px;
  height: 32px;
  padding: 0 20px 0 9px;
  background: #999;
  color: #fff;
  font-weight: 600;
}
.item input {
  appearance: none;
  width: 26px;
  height: 26px;
  margin: 0;
  border: 1px solid #222;
  border-radius: 50%;
  background: radial-gradient(circle, #333 0 5px, #d5dbe6 6px 9px, #fff 12px);
}
.gear { fill: #999; fill-rule: evenodd; }

.viewcube { position: absolute; top: 22px; right: 40px; }
.cube-text text { font: 600 17px "Noto Sans", sans-serif; fill: #9a9da3; text-anchor: middle; }
.axis { font: 700 28px "Noto Sans", sans-serif; text-anchor: middle; }

.navbar {
  position: absolute;
  left: 50%;
  bottom: 8px;
  transform: translateX(-50%);
  display: flex;
  align-items: center;
  height: 48px;
  padding: 0 18px 0 7px;
  background: #f1f1f1;
}
.nav-drop { gap: 11px; margin-right: 7px; }
.nav-look { margin-right: 25px; }
.nav-plain { margin-right: 22px; }
.nav-fit { gap: 11px; margin-right: 23px; }
.nav-view { gap: 5px; }
.nav-view + .nav-view { margin-left: 9px; }

/* Timeline */
.timeline {
  display: flex;
  align-items: center;
  gap: 26px;
  height: 100px;
  padding: 0 26px 2px 22px;
  border-top: 2px solid #c8c8c8;
}
.timeline svg { overflow: visible; }
.settings { margin-left: auto; }
```
